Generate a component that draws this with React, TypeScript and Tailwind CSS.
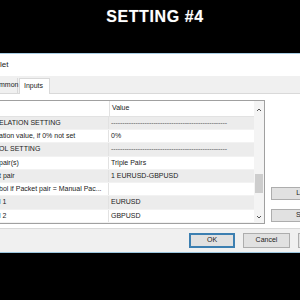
import React from "react";

const rows: { name: string; value: string; dash?: boolean; gray: boolean }[] = [
  { name: "ELATION SETTING", value: "", dash: true, gray: true },
  { name: "ation value, if 0% not set", value: "0%", gray: false },
  { name: "OL SETTING", value: "", dash: true, gray: true },
  { name: "pair(s)", value: "Triple Pairs", gray: false },
  { name: "t pair", value: "1 EURUSD-GBPUSD", gray: true },
  { name: "bol if Packet pair = Manual Pac...", value: "", gray: false },
  { name: "l 1", value: "EURUSD", gray: true },
  { name: "l 2", value: "GBPUSD", gray: false },
];

const dashes = "-".repeat(52);

export default function App() {
  return (
    <div
      className="w-[300px] h-[300px] bg-black overflow-hidden flex flex-col"
      style={{ fontFamily: '"Liberation Sans", Arial, sans-serif' }}
    >
      <div className="h-[53px] flex items-start justify-center pl-[10px] pt-[8px]">
        <span
          className="text-white font-bold text-[16px] tracking-[0.6px] leading-[18px]"
          style={{ textShadow: "0 0 1px #666" }}
        >
          SETTING #4
        </span>
      </div>
      <div className="flex flex-col border-t border-[#a8cde4] border-b border-b-[#9cc6df] text-[#222] overflow-hidden">
        {/* title bar */}
        <div className="h-[22px] bg-white flex items-center text-[8px]">let</div>
        {/* tab strip */}
        <div className="h-[17px] bg-[#f0f0f0] flex items-end text-[7px] relative">
          <div className="h-[15px] flex items-center w-[19px] border-r border-[#d9d9d9] -ml-[1px]">mmon</div>
          <div className="h-[16px] w-[31px] ml-[1px] bg-white border border-b-0 border-[#d9d9d9] flex items-center pl-[4px] relative top-[1px]">
            Inputs
          </div>
        </div>
        {/* tab page */}
        <div className="h-[136px] bg-white border-t border-[#d9d9d9] border-b flex pt-[6px]">
          <div className="w-[265px] shrink-0 h-[124px] border-t border-r border-b border-[#a0a0a0] flex">
            <div className="flex-1 flex flex-col text-[7px]">
              <div className="h-[16px] flex border-b border-[#e2e2e2]">
                <div className="w-[110px] border-r border-[#e2e2e2]" />
                <div className="flex-1 flex items-center pl-[2px]">Value</div>
              </div>
              {rows.map((r, i) => (
                <div
                  key={i}
                  className={`h-[13.3px] flex border-b border-[#f2f2f2] ${r.gray ? "bg-[#ececec]" : "bg-white"}`}
                >
                  <div className="w-[110px] border-r border-[#e2e2e2] flex items-center -ml-[1px] overflow-hidden whitespace-nowrap">
                    {r.name}
                  </div>
                  <div className="flex-1 flex items-center pl-[2px] overflow-hidden whitespace-nowrap">
                    {r.dash ? <span className="text-[#555] tracking-[-0.1px]">{dashes}</span> : r.value}
                  </div>
                </div>
              ))}
            </div>
            {/* scrollbar */}
            <div className="w-[10px] bg-[#f4f4f4] flex flex-col items-center">
              <svg width="8" height="14" viewBox="0 0 8 14" className="mt-[2px]">
                <path d="M2 8 L4 6 L6 8" stroke="#555" strokeWidth="1" fill="none" />
              </svg>
              <div className="mt-[57px] w-[8px] h-[19px] bg-[#cdcdcd]" />
              <div className="flex-1" />
              <svg width="8" height="10" viewBox="0 0 8 10" className="mb-[1px]">
                <path d="M2 4 L4 6 L6 4" stroke="#555" strokeWidth="1" fill="none" />
              </svg>
            </div>
          </div>
          <div className="ml-[6px] shrink-0 flex flex-col pt-[87px] gap-[9px] text-[7px]">
            <div className="w-[66px] h-[13px] bg-[#e1e1e1] border border-[#adadad] flex items-center justify-center">
              Load
            </div>
            <div className="w-[66px] h-[13px] bg-[#e1e1e1] border border-[#adadad] flex items-center justify-center">
              Save
            </div>
          </div>
        </div>
        {/* bottom bar */}
        <div className="h-[23px] bg-[#f0f0f0] flex items-center pl-[189px] gap-[8px] text-[7px]">
          <div className="w-[46px] h-[15px] shrink-0 bg-[#e1e1e1] border-2 border-[#3c7fb1] flex items-center justify-center">
            OK
          </div>
          <div className="w-[47px] h-[15px] shrink-0 bg-[#e1e1e1] border border-[#adadad] flex items-center justify-center">
            Cancel
          </div>
          <div className="w-[47px] h-[15px] shrink-0 bg-[#e1e1e1] border border-[#adadad]" />
        </div>
      </div>
    </div>
  );
}
